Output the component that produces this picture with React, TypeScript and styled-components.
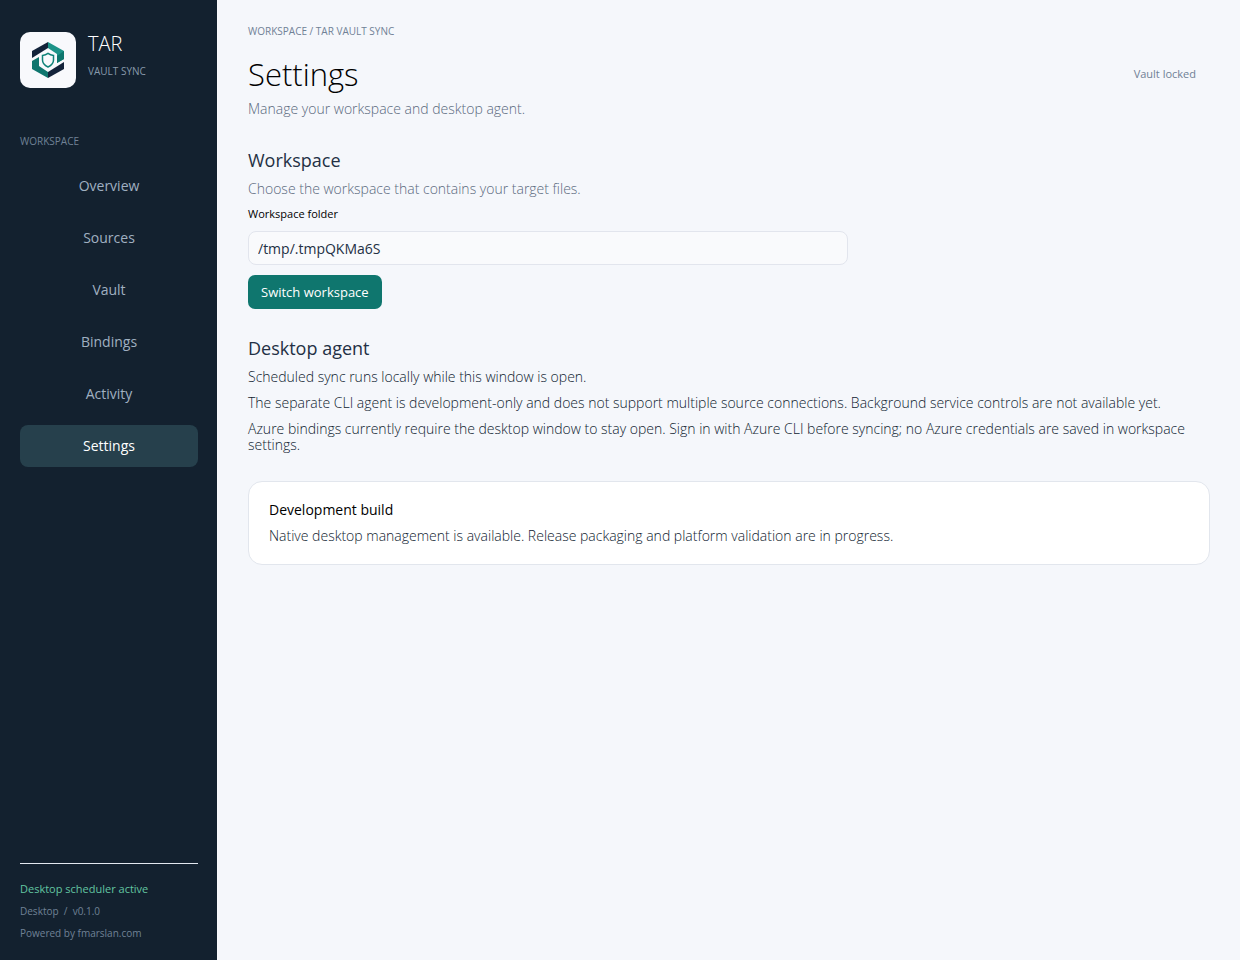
import React, { useState } from "react";
import styled, { createGlobalStyle } from "styled-components";

const GlobalStyle = createGlobalStyle`
  * { box-sizing: border-box; }
  body {
    margin: 0;
    background: #f5f7fb;
    color: #0f1c30;
    font-family: "Open Sans", "Noto Sans", sans-serif;
    font-size: 14px;
    font-weight: 300;
    line-height: 16px;
  }
  h1, h2, h3, p { margin: 0; font-weight: inherit; }
  button, input { font: inherit; }
`;

const Shell = styled.div`
  display: flex;
  min-height: 100vh;
`;

const Sidebar = styled.aside`
  display: flex;
  flex-direction: column;
  flex: 0 0 218px;
  padding: 32px 19px 20px 20px;
  background: #13212f;
  border-right: 1px solid #f8f9fc;
`;

const Brand = styled.div`
  display: flex;
  gap: 12px;
`;

const LogoTile = styled.div`
  display: grid;
  place-items: center;
  width: 56px;
  height: 56px;
  border-radius: 10px;
  background: #f8f9fc;
`;

const BrandName = styled.div`
  color: #fff;
  font-size: 20px;
  line-height: 24px;
`;

const Small = styled.div<{ $color?: string; $size?: number }>`
  color: ${(p) => p.$color ?? "#708196"};
  font-size: ${(p) => p.$size ?? 10}px;
  font-weight: 400;
  line-height: 14px;
`;

const BrandText = styled.div`
  display: flex;
  flex-direction: column;
  gap: 8px;
`;

const NavTitle = styled(Small)`
  margin-top: 46px;
`;

const Nav = styled.nav`
  display: flex;
  flex-direction: column;
  gap: 10px;
  margin-top: 17px;
`;

const NavButton = styled.button<{ $active: boolean }>`
  height: 42px;
  padding: 0;
  border: 0;
  border-radius: 8px;
  background: ${(p) => (p.$active ? "#26404c" : "transparent")};
  color: ${(p) => (p.$active ? "#fff" : "#a0b0c1")};
  font-weight: 400;
  cursor: pointer;
`;

const SidebarFooter = styled.footer`
  display: flex;
  flex-direction: column;
  gap: 8px;
  margin-top: auto;
  padding-top: 18px;
  border-top: 1px solid #e2e8f0;
`;

const Main = styled.main`
  flex: 1;
  min-width: 0;
  padding: 24px 30px;
`;

const Header = styled.header`
  display: flex;
  align-items: center;
  justify-content: space-between;
  margin-top: 16px;
  padding-right: 14px;
`;

const Title = styled.h1`
  color: #000;
  font-size: 31px;
  line-height: 40px;
`;

const Section = styled.section`
  display: flex;
  flex-direction: column;
  align-items: flex-start;
  gap: 10px;
  margin-top: 27px;
`;

const SectionTitle = styled.h2`
  margin-bottom: -2px;
  color: #233044;
  font-size: 18px;
  font-weight: 400;
  line-height: 25px;
`;

const Muted = styled.p`
  color: #5a697d;
`;

const Subtitle = styled(Muted)`
  padding: 7px 0 4px;
`;

const FieldLabel = styled.label`
  color: #000;
  font-size: 11px;
  font-weight: 400;
  line-height: 14px;
`;

const TextField = styled.input`
  width: 100%;
  max-width: 600px;
  height: 34px;
  padding: 0 9px;
  border: 1px solid #e2e5ed;
  border-radius: 8px;
  background: #f9fafc;
  color: #233044;
  && { font-weight: 400; }
`;

const PrimaryButton = styled.button`
  height: 34px;
  padding: 0 13px;
  border: 0;
  border-radius: 7px;
  background: #0f766e;
  color: #fff;
  cursor: pointer;
  font-size: 13px;
  font-weight: 400;
`;

const Card = styled.section`
  display: flex;
  flex-direction: column;
  gap: 10px;
  margin-top: 28px;
  padding: 20px;
  border: 1px solid #e2e6ed;
  border-radius: 14px;
  background: #fff;
`;

const CardTitle = styled.h3`
  color: #000;
  font-size: 14px;
  font-weight: 400;
`;

const Logo = () => (
  <svg width="36" height="40" viewBox="30 40 36 40" aria-hidden="true">
    <path d="M48 42 32 51v7l16-10z" fill="#13233a" />
    <path d="M48 42l16 9v8l-7 4v-9l-9-6z" fill="#1d9388" />
    <path d="M64 51v8l-7 4v-7z" fill="#0f766e" />
    <path d="M48 78l-16-9v-8l7-4v9l9 6z" fill="#0f766e" />
    <path d="M48 78l16-9v-7L48 72z" fill="#13233a" />
    <path
      d="M48 53.400c1.700 1.300 3.500 1.900 5.500 2v4.600c0 3.300-2.100 5.500-5.500 7-3.400-1.500-5.500-3.700-5.500-7v-4.600c2-.1 3.800-.7 5.500-2z"
      fill="#f8f9fc"
      stroke="#0f8278"
      strokeWidth="1.500"
    />
  </svg>
);

const pages = ["Overview", "Sources", "Vault", "Bindings", "Activity", "Settings"];

export default function App() {
  const [active, setActive] = useState("Settings");
  const [folder, setFolder] = useState("/tmp/.tmpQKMa6S");

  return (
    <>
      <GlobalStyle />
      <Shell>
        <Sidebar>
          <Brand>
            <LogoTile>
              <Logo />
            </LogoTile>
            <BrandText>
              <BrandName>TAR</BrandName>
              <Small $color="#8799ab">VAULT SYNC</Small>
            </BrandText>
          </Brand>
          <NavTitle>WORKSPACE</NavTitle>
          <Nav>
            {pages.map((page) => (
              <NavButton key={page} $active={page === active} onClick={() => setActive(page)}>
                {page}
              </NavButton>
            ))}
          </Nav>
          <SidebarFooter>
            <Small $color="#62c5a1" $size={11}>Desktop scheduler active</Small>
            <Small>Desktop&nbsp; /&nbsp; v0.1.0</Small>
            <Small>Powered by fmarslan.com</Small>
          </SidebarFooter>
        </Sidebar>
        <Main>
          <Small>WORKSPACE / TAR VAULT SYNC</Small>
          <Header>
            <Title>Settings</Title>
            <Small $size={11}>Vault locked</Small>
          </Header>
          <Subtitle>Manage your workspace and desktop agent.</Subtitle>
          <Section>
            <SectionTitle>Workspace</SectionTitle>
            <Muted>Choose the workspace that contains your target files.</Muted>
            <FieldLabel htmlFor="folder">Workspace folder</FieldLabel>
            <TextField id="folder" value={folder} onChange={(e) => setFolder(e.target.value)} />
            <PrimaryButton>Switch workspace</PrimaryButton>
          </Section>
          <Section>
            <SectionTitle>Desktop agent</SectionTitle>
            <p>Scheduled sync runs locally while this window is open.</p>
            <p>
              The separate CLI agent is development-only and does not support multiple source
              connections. Background service controls are not available yet.
            </p>
            <p>
              Azure bindings currently require the desktop window to stay open. Sign in with Azure
              CLI before syncing; no Azure credentials are saved in workspace settings.
            </p>
          </Section>
          <Card>
            <CardTitle>Development build</CardTitle>
            <p>
              Native desktop management is available. Release packaging and platform validation are
              in progress.
            </p>
          </Card>
        </Main>
      </Shell>
    </>
  );
}
